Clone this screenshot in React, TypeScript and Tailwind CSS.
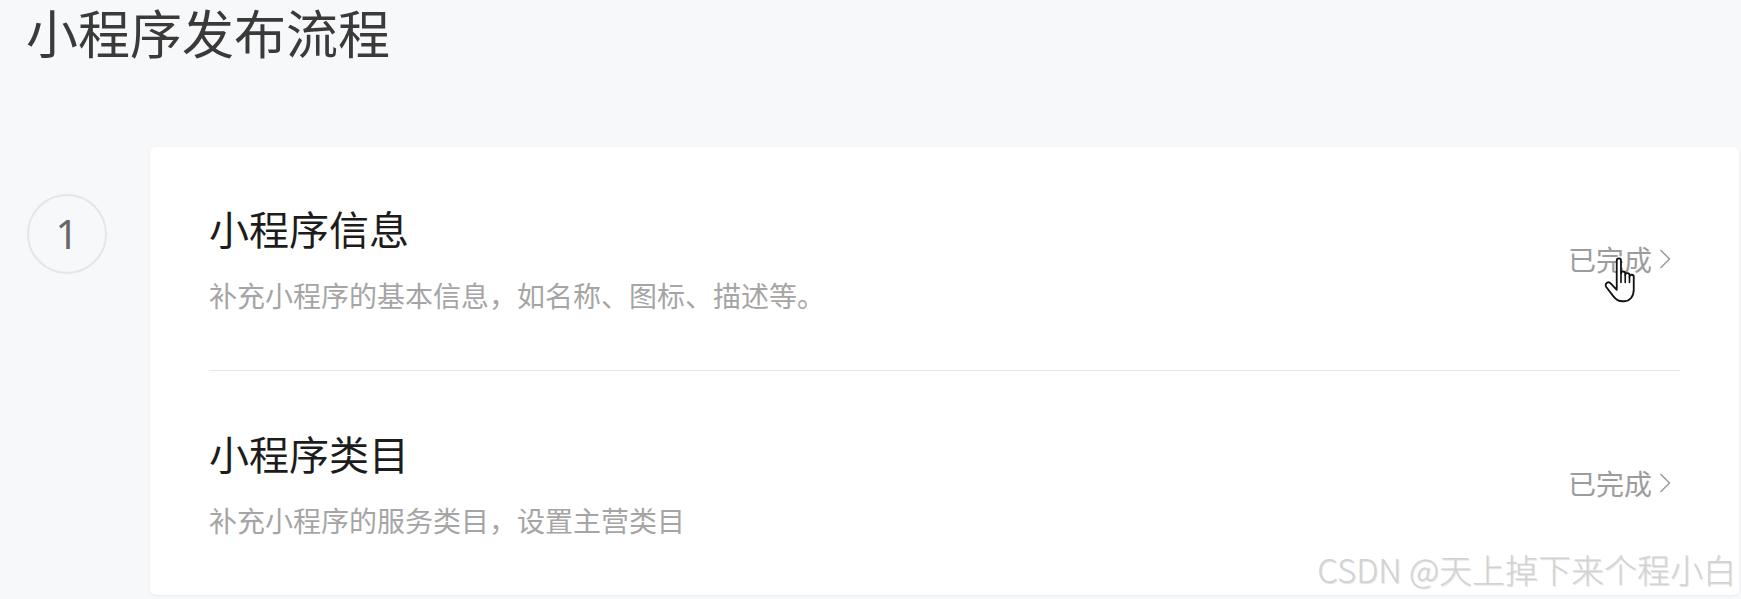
import React from "react";

const CJK = "font-['Noto_Sans_CJK_SC','Noto_Sans',sans-serif]";

function Chevron() {
  return (
    <svg width="14" height="20" viewBox="0 0 14 20" className="ml-[6px] shrink-0">
      <path d="M3 1.5 L11.5 10 L3 18.5" fill="none" stroke="#9a9a9a" strokeWidth="1.5" strokeLinecap="round" strokeLinejoin="round" />
    </svg>
  );
}

function HandCursor() {
  return (
    <svg
      width="36"
      height="46"
      viewBox="0 0 22 28"
      className="absolute left-[1602px] top-[257px] pointer-events-none"
    >
      <path
        d="M9 2.2 C9 1.4 9.6 0.8 10.3 0.8 C11 0.8 11.6 1.4 11.6 2.2 L11.6 10 C11.6 9.3 12.2 8.8 12.9 8.8 C13.6 8.8 14.2 9.3 14.2 10 L14.2 11 C14.2 10.3 14.8 9.8 15.5 9.8 C16.2 9.8 16.8 10.3 16.8 11 L16.8 12 C16.8 11.3 17.4 10.8 18.1 10.8 C18.8 10.8 19.4 11.3 19.4 12 L19.4 20 C19.4 24 17 27 13.5 27 L12.5 27 C10 27 8.5 26 7 24 L2.6 18.3 C2 17.5 2.1 16.4 2.9 15.8 C3.7 15.2 4.7 15.4 5.3 16.1 L9 20 Z"
        fill="#ffffff"
        stroke="#111111"
        strokeWidth="1.1"
        strokeLinejoin="round"
      />
      <path d="M11.6 10 L11.6 15.5 M14.2 11 L14.2 15.5 M16.8 12 L16.8 15.5" stroke="#111111" strokeWidth="1" fill="none" strokeLinecap="round" />
    </svg>
  );
}

function Row({ title, desc }: { title: string; desc: string }) {
  return (
    <div className="flex items-center justify-between pr-[8px] h-full">
      <div className="flex flex-col">
        <div className="text-[40px] leading-[40px] text-[#1c1c1c]">{title}</div>
        <div className="mt-[33px] text-[28px] leading-[28px] text-[#a5a5a5]">{desc}</div>
      </div>
      <div className="flex items-center">
        <span className="text-[28px] leading-[28px] text-[#9c9c9c]">已完成</span>
        <Chevron />
      </div>
    </div>
  );
}

export default function App() {
  return (
    <div className={`relative h-[599px] w-full overflow-hidden bg-[#f7f8fa] ${CJK}`}>
      <div className="pt-[2px] pl-[26px]">
        <h1 className="text-[52px] leading-[60px] text-[#3a3a3a] font-normal">小程序发布流程</h1>
      </div>
      <div className="mt-[85px] flex items-start pl-[27px] pr-[2px]">
        <div className="mt-[47px] flex h-[80px] w-[80px] shrink-0 items-center justify-center rounded-full border-[2.5px] border-[#e6e6e8]">
          <span className="font-['Noto_Sans',sans-serif] text-[40px] leading-[40px] text-[#666666]">1</span>
        </div>
        <div className="ml-[43px] flex-1 rounded-[6px] bg-white px-[59px] shadow-[0_1px_3px_rgba(0,0,0,0.06)]">
          <div className="h-[223px]">
            <Row title="小程序信息" desc="补充小程序的基本信息，如名称、图标、描述等。" />
          </div>
          <div className="h-px bg-[#e8e8e8]" />
          <div className="h-[224px]">
            <Row title="小程序类目" desc="补充小程序的服务类目，设置主营类目" />
          </div>
        </div>
      </div>
      <div className="absolute right-[5px] top-[553px] text-[33px] leading-[33px] font-light text-[#d2d2d2] [text-shadow:1px_1px_1px_rgba(0,0,0,0.12)] whitespace-nowrap">
        CSDN @天上掉下来个程小白
      </div>
      <HandCursor />
    </div>
  );
}
